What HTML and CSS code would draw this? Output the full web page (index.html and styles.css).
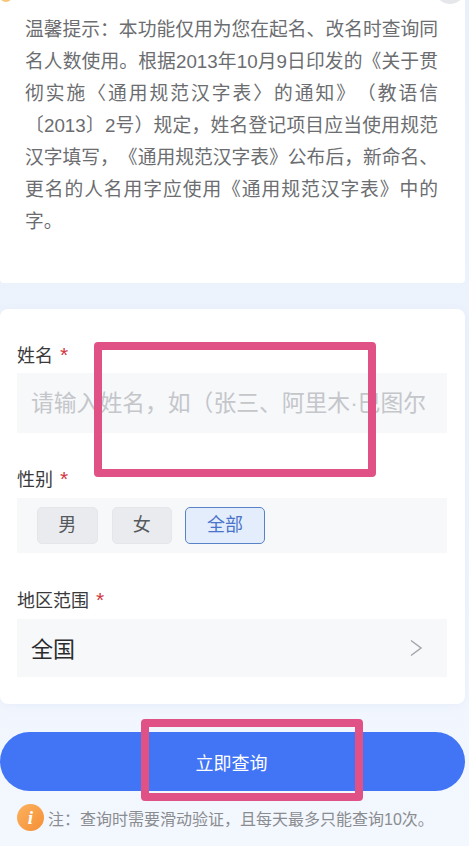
FILE: index.html
```html
<!DOCTYPE html>
<html lang="zh">
<head>
  <meta charset="UTF-8">
  <meta name="viewport" content="width=device-width, initial-scale=1.0">
  <title>同名查询</title>
  <link rel="stylesheet" href="styles.css">
</head>
<body>
  <div class="page">
    <span class="corner-dot"></span>
    <span class="corner-close"></span>

    <div class="tip-card">
      <p>温馨提示：本功能仅用为您在起名、改名时查询同名人数使用。根据2013年10月9日印发的《关于贯彻实施〈通用规范汉字表〉的通知》（教语信〔2013〕2号）规定，姓名登记项目应当使用规范汉字填写，《通用规范汉字表》公布后，新命名、更名的人名用字应使用《通用规范汉字表》中的字。</p>
    </div>

    <div class="form-card">
      <div class="form-group">
        <label>姓名 <span class="required">*</span></label>
        <div class="field name-field">请输入姓名，如（张三、阿里木·巴图尔</div>
      </div>

      <div class="form-group gender-group">
        <label>性别 <span class="required">*</span></label>
        <div class="field gender-field">
          <span class="chip">男</span>
          <span class="chip">女</span>
          <span class="chip active">全部</span>
        </div>
      </div>

      <div class="form-group region-group">
        <label>地区范围 <span class="required">*</span></label>
        <div class="field region-field">
          <span class="region-value">全国</span>
          <svg class="chevron" width="14" height="18" viewBox="0 0 14 18">
            <path d="M2 1.5 L12 9 L2 16.5" fill="none" stroke="#a3a6ab" stroke-width="1.5"/>
          </svg>
        </div>
      </div>
    </div>

    <button class="submit">立即查询</button>

    <div class="note">
      <span class="note-icon">i</span>
      <span>注：查询时需要滑动验证，且每天最多只能查询10次。</span>
    </div>

    <div class="mark mark-name"></div>
    <div class="mark mark-submit"></div>
  </div>
</body>
</html>
```

FILE: styles.css
```css
* {
  box-sizing: border-box;
}

body {
  margin: 0;
  font-family: "Liberation Sans", "Noto Sans CJK SC", sans-serif;
  text-spacing-trim: space-all;
}

.page {
  position: relative;
  height: 846px;
  overflow: hidden;
  padding-right: 4px;
  background: linear-gradient(180deg, #e9f0fb 0%, #f3f7fe 100%);
}

.corner-dot {
  position: absolute;
  z-index: 1;
  top: -8px;
  left: 0;
  width: 12px;
  height: 10px;
  border-radius: 0 0 6px 6px;
  background: #f6c678;
}

.corner-close {
  position: absolute;
  z-index: 1;
  top: -26px;
  left: 435px;
  width: 30px;
  height: 30px;
  border-radius: 50%;
  background: #e6e7ea;
}

.tip-card {
  height: 283px;
  padding: 14px 27px 0 25px;
  background: #fff;
  border-radius: 0 0 4px 4px;
}

.tip-card p {
  margin: 0;
  font-size: 18.75px;
  line-height: 32px;
  text-align: justify;
  color: #6b6d70;
}

.form-card {
  height: 395px;
  margin-top: 26px;
  padding: 32px 18px 0 17px;
  background: #fff;
  border-radius: 8px;
  box-shadow: 0 2px 8px rgba(120, 150, 200, 0.08);
}

.form-group label {
  display: block;
  height: 32px;
  font-size: 18px;
  line-height: 30px;
  color: #3a3a3c;
}

.required {
  margin-left: 2px;
  font-size: 21px;
  line-height: 20px;
  color: #d0383f;
}

.field {
  background: #f7f8fa;
}

.name-field {
  height: 60px;
  padding-left: 14px;
  font-size: 22.8px;
  line-height: 60px;
  white-space: nowrap;
  overflow: hidden;
  color: #c4c6ca;
}

.gender-group {
  margin-top: 33px;
}

.gender-group label {
  line-height: 28px;
}

.gender-field {
  display: flex;
  align-items: center;
  gap: 14px;
  height: 55px;
  padding-left: 20px;
}

.chip {
  width: 60.5px;
  height: 37px;
  border: 1px solid #e4e6e9;
  border-radius: 5px;
  background: #e9ebee;
  font-size: 18px;
  line-height: 35px;
  text-align: center;
  color: #55585c;
}

.chip.active {
  width: 80px;
  margin-left: -1px;
  border-color: #5a82c6;
  background: #e4edfc;
  color: #4a74c9;
}

.region-group {
  margin-top: 34px;
}

.region-group label {
  line-height: 29px;
}

.region-field {
  display: flex;
  align-items: center;
  justify-content: space-between;
  height: 58px;
  padding: 0 24px 0 14px;
  font-size: 22px;
  color: #2b2b2d;
}

.region-value {
  margin-bottom: 3px;
}

.submit {
  display: block;
  width: 465px;
  height: 59px;
  margin-top: 28px;
  padding: 0 2px 0 0;
  border: none;
  border-radius: 30px;
  background: #4275f6;
  font-family: inherit;
  font-size: 18px;
  color: #fff;
}

.note {
  display: flex;
  align-items: center;
  gap: 4px;
  margin-top: 13px;
  padding-left: 17px;
  font-size: 16px;
  color: #8a8c90;
  white-space: nowrap;
}

.note-icon {
  width: 27px;
  height: 27px;
  border-radius: 50%;
  background: linear-gradient(135deg, #fbb25f, #f58f35);
  font-family: "Liberation Serif", serif;
  font-style: italic;
  font-weight: bold;
  font-size: 19px;
  line-height: 27px;
  text-align: center;
  color: #fff;
}

.mark {
  position: absolute;
  border: 8px solid #e05285;
  border-radius: 4px;
}

.mark-name {
  left: 94px;
  top: 342px;
  width: 282px;
  height: 135px;
}

.mark-submit {
  left: 141px;
  top: 719px;
  width: 222px;
  height: 82px;
}
```
